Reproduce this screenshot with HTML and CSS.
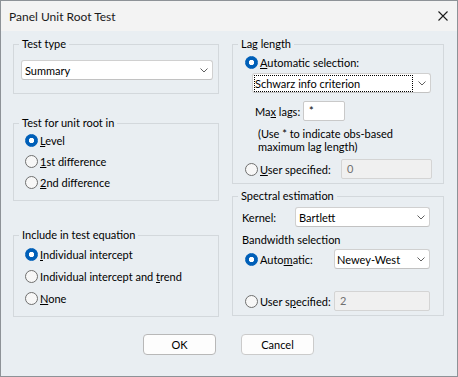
FILE: index.html
```html
<!DOCTYPE html>
<html>
<head>
<meta charset="utf-8">
<link rel="stylesheet" href="styles.css">
</head>
<body>
<div class="window">
  <div class="titlebar">
    <span class="title">Panel Unit Root Test</span>
    <svg class="close" width="10" height="10" viewBox="0 0 10 10"><path d="M0.5 0.5 L9.5 9.5 M9.5 0.5 L0.5 9.5" stroke="#1b1b1b" stroke-width="1.1" fill="none"/></svg>
  </div>
  <div class="content">
    <div class="columns">
      <div class="col col-left">
        <fieldset class="grp g-type">
          <legend>Test type</legend>
          <div class="combo combo-type"><span>Summary</span><svg class="chev" width="8" height="5" viewBox="0 0 8 5"><path d="M0.5 0.5 L4 4 L7.5 0.5" stroke="#606060" fill="none"/></svg></div>
        </fieldset>
        <fieldset class="grp g-root">
          <legend>Test for unit root in</legend>
          <div class="opt r21 first"><span class="radio on"></span><span><u>L</u>evel</span></div>
          <div class="opt r21"><span class="radio"></span><span><u>1</u>st difference</span></div>
          <div class="opt r21"><span class="radio"></span><span><u>2</u>nd difference</span></div>
        </fieldset>
        <fieldset class="grp g-eq">
          <legend>Include in test equation</legend>
          <div class="opt r22"><span class="radio on"></span><span><u>I</u>ndividual intercept</span></div>
          <div class="opt r22"><span class="radio"></span><span>Individual intercept and <u>t</u>rend</span></div>
          <div class="opt r22"><span class="radio"></span><span><u>N</u>one</span></div>
        </fieldset>
      </div>
      <div class="col col-right">
        <fieldset class="grp g-lag">
          <legend>Lag length</legend>
          <div class="opt ropt"><span class="radio on"></span><span><u>A</u>utomatic selection:</span></div>
          <div class="combo combo-schwarz"><span class="focus">Schwarz info criterion</span><svg class="chev" width="8" height="5" viewBox="0 0 8 5"><path d="M0.5 0.5 L4 4 L7.5 0.5" stroke="#606060" fill="none"/></svg></div>
          <div class="maxrow"><span class="maxlabel">Ma<u>x</u> lags:</span><span class="field field-max">*</span></div>
          <div class="note">(Use * to indicate obs-based<br>maximum lag length)</div>
          <div class="opt ropt user-lag"><span class="radio"></span><span class="ulabel ulabel-lag"><u>U</u>ser specified:</span><span class="field disabled field-lag">0</span></div>
        </fieldset>
        <fieldset class="grp g-spec">
          <legend>Spectral estimation</legend>
          <div class="krow"><span class="klabel">Kernel:</span><div class="combo combo-kernel"><span>Bartlett</span><svg class="chev" width="8" height="5" viewBox="0 0 8 5"><path d="M0.5 0.5 L4 4 L7.5 0.5" stroke="#606060" fill="none"/></svg></div></div>
          <div class="bw">Bandwidth selection</div>
          <div class="opt ropt auto-bw"><span class="radio on"></span><span class="ulabel ulabel-spec">Auto<u>m</u>atic:</span><div class="combo combo-bw"><span>Newey-West</span><svg class="chev" width="8" height="5" viewBox="0 0 8 5"><path d="M0.5 0.5 L4 4 L7.5 0.5" stroke="#606060" fill="none"/></svg></div></div>
          <div class="opt ropt user-bw"><span class="radio"></span><span class="ulabel ulabel-spec">User s<u>p</u>ecified:</span><span class="field disabled field-bw">2</span></div>
        </fieldset>
      </div>
    </div>
    <div class="buttons">
      <button class="btn btn-default">OK</button>
      <button class="btn">Cancel</button>
    </div>
  </div>
</div>
</body>
</html>
```

FILE: styles.css
```css
html, body {
  margin: 0;
  padding: 0;
}
body {
  background: #9ca1a6;
  font-family: Lato, "Liberation Sans", sans-serif;
  font-size: 11px;
  color: #000;
}
.window {
  width: 456px;
  height: 375px;
  border: 1px solid #8d9297;
  background: #e9eef2;
  display: flex;
  flex-direction: column;
}
.titlebar {
  height: 30px;
  flex: none;
  background: #f3f3f3;
  display: flex;
  align-items: center;
  justify-content: space-between;
  padding: 0 9px 0 8px;
}
.title {
  font-size: 12px;
  color: #1a1a1a;
}
.close { display: block; }
.content {
  flex: 1;
  padding: 5px 13px 0 12px;
}
.columns {
  display: flex;
  gap: 13px;
  align-items: flex-start;
}
.col { display: flex; flex-direction: column; }
.col-left { width: 206px; }
.col-right { width: 212px; }

.grp {
  margin: 0;
  border: 1px solid #d3d8dc;
  padding: 0 5px 0 7px;
  min-width: 0;
}
.grp legend {
  padding: 0 3px;
  margin-left: -2px;
  line-height: 16px;
  font-size: 11px;
}
.g-type { padding-bottom: 13px; }
.g-root { margin-top: 21px; padding-bottom: 7px; }
.g-eq { margin-top: 26px; padding-bottom: 7px; }
.g-lag { padding-bottom: 4px; }
.g-spec { margin-top: 4px; padding-bottom: 4px; }

.combo {
  display: flex;
  align-items: center;
  justify-content: space-between;
  box-sizing: border-box;
  height: 20px;
  border: 1px solid #d0d0d0;
  border-bottom-color: #c2c2c2;
  border-radius: 3px;
  background: #fff;
  padding: 0 4px 0 3px;
}
.chev { display: block; flex: none; }
.combo-type { margin-top: 8px; }
.combo-schwarz {
  margin: 1px 0 0 12px;
  width: 179px;
  padding-left: 1px;
}
.focus {
  display: block;
  box-sizing: border-box;
  width: 159px;
  height: 17px;
  line-height: 15px;
  border: 1px dotted #000;
  white-space: nowrap;
}
.combo-kernel { width: 135px; padding-left: 3px; }
.combo-bw { width: 96px; padding-left: 2px; }

.opt {
  display: flex;
  align-items: center;
  gap: 2px;
  white-space: nowrap;
}
.r21 { height: 21px; margin-left: 4px; }
.r21.first { margin-top: -1px; }
.r22 { height: 22px; margin-left: 4px; }
.ropt { height: 20px; margin-left: 5px; }

.radio {
  flex: none;
  width: 13px;
  height: 13px;
  box-sizing: border-box;
  border-radius: 50%;
  border: 1px solid #6f6f6f;
  background: #f7f7f7;
}
.radio.on {
  border-color: #005fb8;
  background: radial-gradient(circle, #fff 0 2.3px, #005fb8 3px);
}
u { text-underline-offset: 1px; }

.field {
  box-sizing: border-box;
  height: 20px;
  border: 1px solid #c9c9c9;
  border-radius: 2px;
  background: #fff;
  padding-left: 5px;
  line-height: 18px;
  display: block;
}
.field.disabled {
  background: #f0f0f0;
  border-color: #d4d4d4;
  color: #707070;
}
.maxrow {
  display: flex;
  align-items: center;
  margin: 8px 0 0 15px;
  white-space: nowrap;
}
.maxlabel { width: 48px; }
.field-max { width: 42px; padding-left: 5px; }
.note {
  margin: 6px 0 0 18px;
  line-height: 13px;
}
.user-lag { margin-top: 6px; }
.ulabel-lag { width: 79px; }
.field-lag { width: 91px; }

.krow {
  display: flex;
  align-items: center;
  margin: 3px 0 0 2px;
}
.klabel { width: 53px; }
.bw {
  margin: 5px 0 0 2px;
  line-height: 16px;
}
.auto-bw { margin-top: 1px; }
.ulabel-spec { width: 72px; }
.user-bw { margin-top: 22px; }
.field-bw { width: 96px; }

.buttons {
  display: flex;
  justify-content: center;
  gap: 25px;
  margin-top: 17px;
}
.btn {
  width: 73px;
  height: 21px;
  box-sizing: border-box;
  border: 1px solid #cbcbcb;
  border-radius: 4px;
  background: #fdfdfd;
  font-family: inherit;
  font-size: 11px;
  color: #000;
  padding: 0;
}
.btn-default { border-color: #b8b8b8; }
```
